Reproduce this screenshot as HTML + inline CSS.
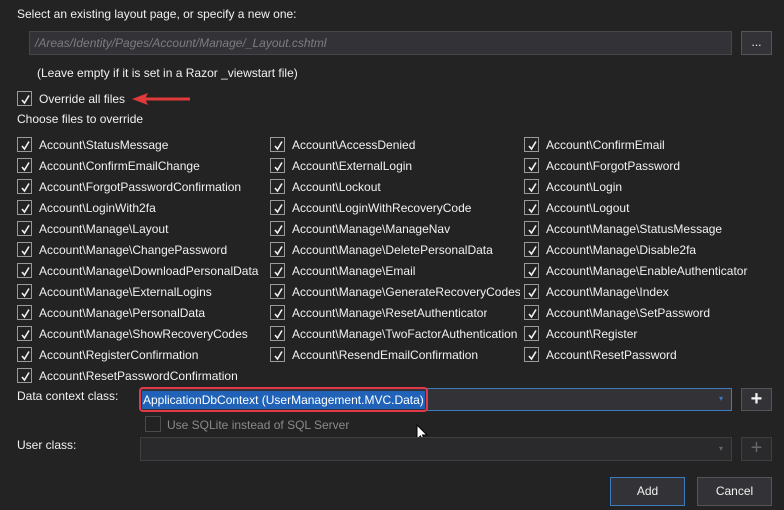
<!DOCTYPE html>
<html><head><meta charset="utf-8"><style>
*{box-sizing:border-box;margin:0;padding:0}
body{width:784px;height:510px;background:#232324;color:#f1f1f1;font-family:"Liberation Sans",sans-serif;font-size:12px;position:relative;overflow:hidden}
.a{position:absolute;white-space:nowrap;line-height:14px}
.cb{position:absolute;width:15px;height:15px;border:1px solid #9a9a9a;background:#232324}
.cb svg{position:absolute;left:2px;top:2px}
.box{position:absolute;background:#333337;border:1px solid #464649}
.btn{position:absolute;background:#333337;border:1px solid #555558;color:#f1f1f1;text-align:center}
</style></head><body>
<div class="a" style="left:17px;top:7px">Select an existing layout page, or specify a new one:</div>
<div class="box" style="left:29px;top:31px;width:703px;height:24px"></div>
<div class="a" style="left:35px;top:36px;color:#7d7d80;font-style:italic">/Areas/Identity/Pages/Account/Manage/_Layout.cshtml</div>
<div class="btn" style="left:741px;top:31px;width:31px;height:24px;line-height:20px">...</div>
<div class="a" style="left:37px;top:66px">(Leave empty if it is set in a Razor _viewstart file)</div>
<div class="cb" style="left:17px;top:91px"><svg width="11" height="11" viewBox="0 0 11 11"><path d="M2 6 L4.5 9 L9 1.5" stroke="#f1f1f1" stroke-width="1.6" fill="none"/></svg></div>
<div class="a" style="left:39px;top:92px">Override all files</div>
<svg style="position:absolute;left:132px;top:92px" width="60" height="14"><path d="M4 7 L58 7" stroke="#e03a3a" stroke-width="3"/><path d="M0 7 L16 1 L13 7 L16 13 Z" fill="#e03a3a"/></svg>
<div class="a" style="left:17px;top:112px">Choose files to override</div>
<div id="g"></div>
<div class="a" style="left:17px;top:389px">Data context class:</div>
<div class="box" style="left:140px;top:388px;width:592px;height:23px;border-color:#3d7bbf"></div>
<div style="position:absolute;left:139px;top:387px;width:289px;height:25px;border:2px solid #e03a4a;border-radius:4px"></div>
<div class="a" style="left:142px;top:391px;background:#1f62b8;color:#fff;padding:1px 1px;line-height:16px">ApplicationDbContext (UserManagement.MVC.Data)</div>
<div class="a" style="left:719px;top:392px;color:#3d7bbf;font-size:8px">▾</div>
<div class="btn" style="left:741px;top:388px;width:31px;height:23px;font-size:20px;line-height:20px;font-weight:bold">+</div>
<div class="cb" style="left:145px;top:416px;border-color:#4a4a4d;width:16px;height:16px"></div>
<div class="a" style="left:167px;top:418px;color:#8a8a8d">Use SQLite instead of SQL Server</div>
<svg style="position:absolute;left:416px;top:424px" width="14" height="20"><path d="M1 1 L1 15 L4.5 12 L7 18 L9 17 L6.5 11 L11 11 Z" fill="#fff" stroke="#000" stroke-width="1"/></svg>
<div class="a" style="left:17px;top:438px">User class:</div>
<div class="box" style="left:140px;top:437px;width:592px;height:24px;background:#2a2a2c;border-color:#3f3f42"></div>
<div class="a" style="left:719px;top:442px;color:#666;font-size:8px">▾</div>
<div class="btn" style="left:741px;top:437px;width:31px;height:24px;font-size:20px;line-height:21px;color:#666;border-color:#3f3f42;background:#2a2a2c">+</div>
<div class="btn" style="left:610px;top:477px;width:75px;height:29px;line-height:27px;border-color:#3d7bbf">Add</div>
<div class="btn" style="left:697px;top:477px;width:75px;height:29px;line-height:27px">Cancel</div>
<script>
var c=[["StatusMessage","ConfirmEmailChange","ForgotPasswordConfirmation","LoginWith2fa","Manage\\Layout","Manage\\ChangePassword","Manage\\DownloadPersonalData","Manage\\ExternalLogins","Manage\\PersonalData","Manage\\ShowRecoveryCodes","RegisterConfirmation","ResetPasswordConfirmation"],
["AccessDenied","ExternalLogin","Lockout","LoginWithRecoveryCode","Manage\\ManageNav","Manage\\DeletePersonalData","Manage\\Email","Manage\\GenerateRecoveryCodes","Manage\\ResetAuthenticator","Manage\\TwoFactorAuthentication","ResendEmailConfirmation"],
["ConfirmEmail","ForgotPassword","Login","Logout","Manage\\StatusMessage","Manage\\Disable2fa","Manage\\EnableAuthenticator","Manage\\Index","Manage\\SetPassword","Register","ResetPassword"]];
var xs=[17,270,524],h="";
c.forEach(function(col,i){col.forEach(function(t,j){var y=137+j*21;
h+='<div class="cb" style="left:'+xs[i]+'px;top:'+y+'px"><svg width="11" height="11" viewBox="0 0 11 11"><path d="M2 6 L4.5 9 L9 1.5" stroke="#f1f1f1" stroke-width="1.6" fill="none"/></svg></div>';
var w=i==1?'max-width:228px;overflow:hidden;':'';
h+='<div class="a" style="'+w+'left:'+(xs[i]+22)+'px;top:'+(y+1)+'px">Account\\'+t+'</div>';});});
document.getElementById('g').innerHTML=h;
</script>
</body></html>
